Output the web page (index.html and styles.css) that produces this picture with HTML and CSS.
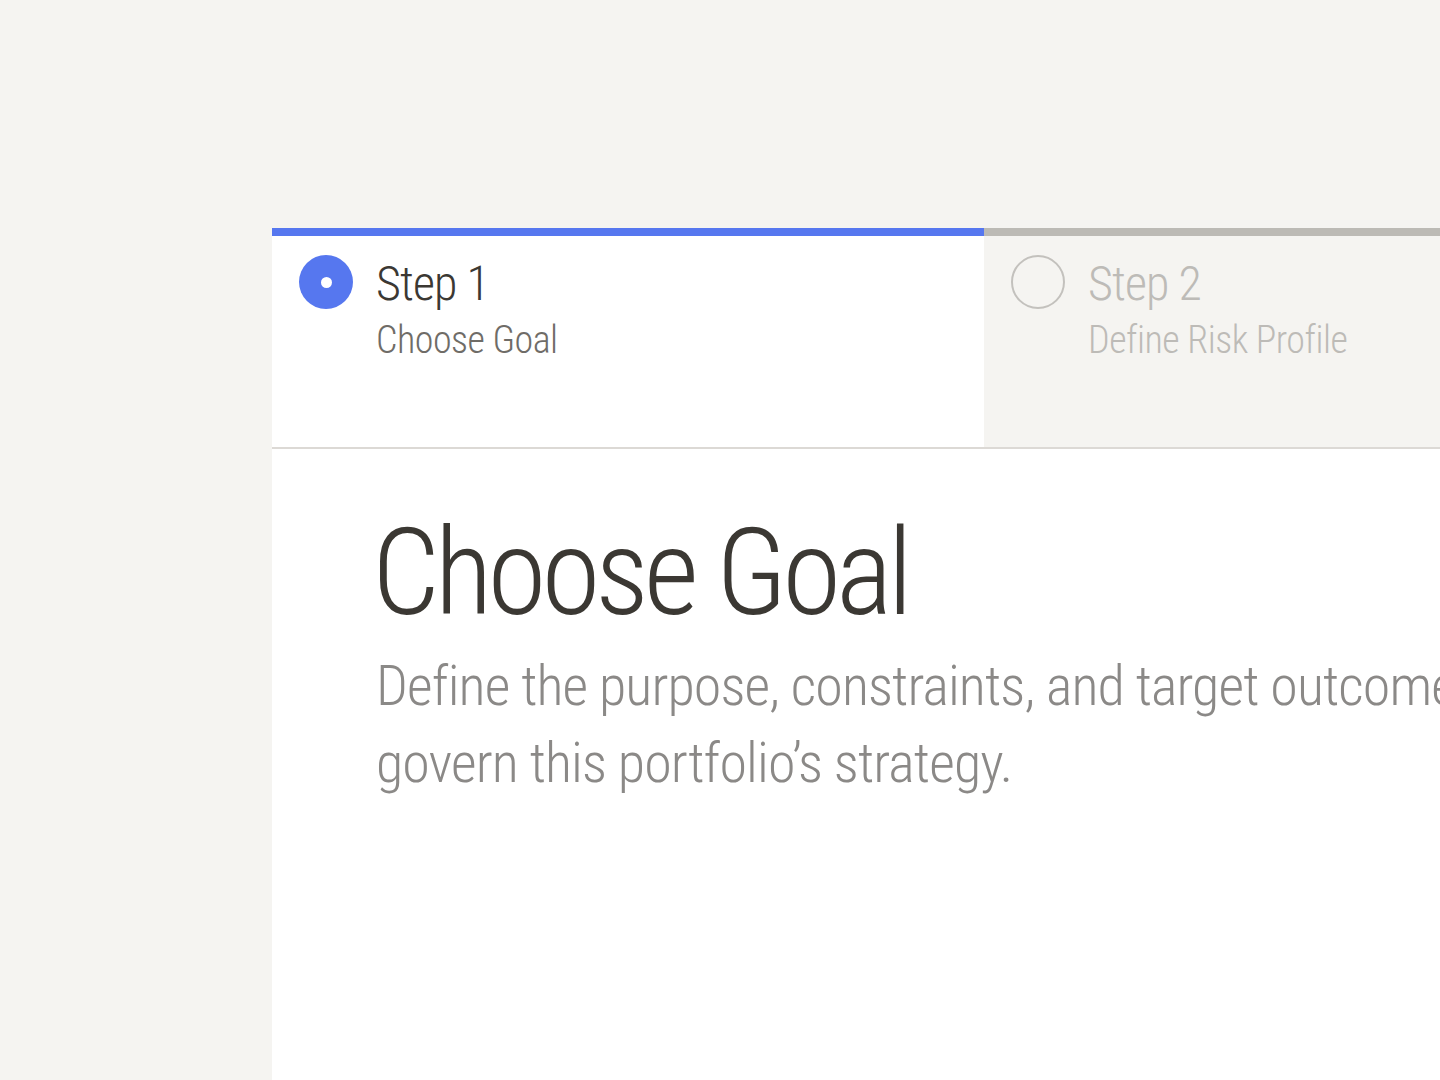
FILE: index.html
```html
<!DOCTYPE html>
<html lang="en">
<head>
<meta charset="utf-8">
<title>Choose Goal</title>
<link rel="stylesheet" href="styles.css">
</head>
<body>
<main class="card">
  <nav class="steps">
    <div class="step step-active">
      <span class="dot dot-active"></span>
      <div class="step-text">
        <div class="step-num">Step 1</div>
        <div class="step-name">Choose Goal</div>
      </div>
    </div>
    <div class="step step-pending">
      <span class="dot dot-pending"></span>
      <div class="step-text">
        <div class="step-num">Step 2</div>
        <div class="step-name">Define Risk Profile</div>
      </div>
    </div>
  </nav>
  <section class="content">
    <h1 class="title">Choose Goal</h1>
    <p class="lead">Define the purpose, constraints, and target outcomes that govern this portfolio’s strategy.</p>
  </section>
</main>
</body>
</html>
```
FILE: styles.css
```css
html, body {
  margin: 0;
  padding: 0;
}
body {
  background: #f5f4f1;
  width: 1440px;
  height: 1080px;
  overflow: hidden;
  font-family: Roboto, "Liberation Sans", sans-serif;
  font-weight: 300;
  font-stretch: 75%;
}
.card {
  margin: 228px 0 0 272px;
  width: 1424px;
  height: 900px;
  background: #ffffff;
}
.steps {
  display: flex;
  border-bottom: 2px solid #dcd9d5;
}
.step {
  width: 712px;
  height: 219px;
  display: flex;
  align-items: flex-start;
  gap: 23px;
  padding: 19px 0 0 27px;
  box-sizing: border-box;
}
.step-active {
  background: #ffffff;
  border-top: 8px solid #5677ef;
}
.step-pending {
  background: #f5f4f1;
  border-top: 8px solid #bcbab5;
}
.dot {
  flex: none;
  width: 54px;
  height: 54px;
  border-radius: 50%;
  box-sizing: border-box;
  display: flex;
  align-items: center;
  justify-content: center;
}
.dot-active {
  background: #5677ef;
}
.dot-active::after {
  content: "";
  width: 11px;
  height: 11px;
  border-radius: 50%;
  background: #ffffff;
}
.dot-pending {
  border: 2.5px solid #c3c1bd;
}
.step-text {
  display: flex;
  flex-direction: column;
  gap: 6px;
  padding-top: 1px;
}
.step-num {
  font-size: 48px;
  line-height: 56px;
  letter-spacing: -0.9px;
}
.step-name {
  font-size: 38px;
  line-height: 44px;
  letter-spacing: -0.5px;
}
.step-active .step-num { color: #3b3833; }
.step-active .step-name { color: #6f6c67; }
.step-pending .step-num,
.step-pending .step-name { color: #bdbbb7; }
.content {
  padding: 59px 0 0 100px;
}
.title {
  margin: 0;
  font-size: 120px;
  line-height: 130px;
  font-weight: 300;
  letter-spacing: -5px;
  color: #3b3833;
}
.lead {
  margin: 10px 0 0 4px;
  width: 1250px;
  font-size: 56px;
  line-height: 77px;
  letter-spacing: -0.9px;
  color: #8b8987;
}
```
